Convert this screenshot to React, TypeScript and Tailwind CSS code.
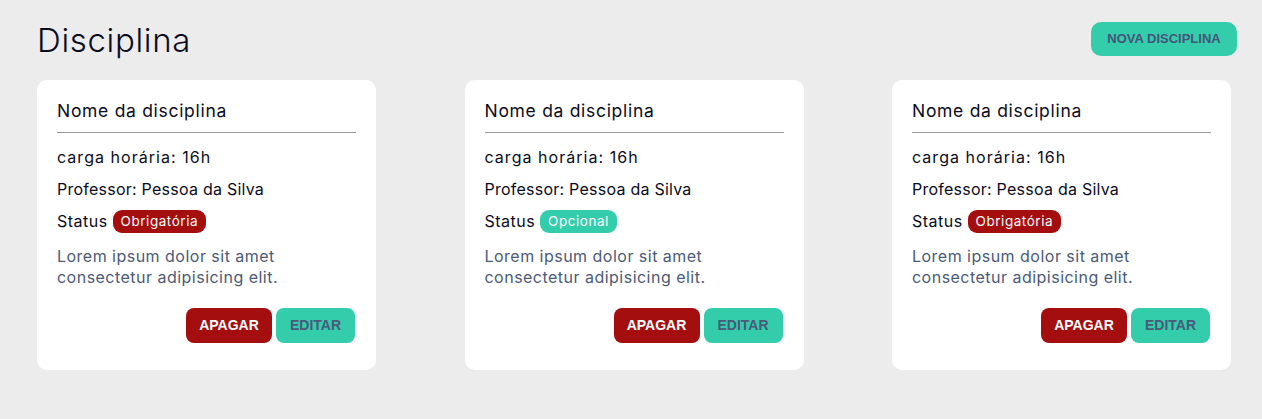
import React from "react";

type Status = "Obrigatória" | "Opcional";

interface Disciplina {
  id: number;
  nome: string;
  carga: string;
  professor: string;
  status: Status;
  descricao: string;
}

const disciplinas: Disciplina[] = [
  {
    id: 1,
    nome: "Nome da disciplina",
    carga: "16h",
    professor: "Pessoa da Silva",
    status: "Obrigatória",
    descricao: "Lorem ipsum dolor sit amet consectetur adipisicing elit.",
  },
  {
    id: 2,
    nome: "Nome da disciplina",
    carga: "16h",
    professor: "Pessoa da Silva",
    status: "Opcional",
    descricao: "Lorem ipsum dolor sit amet consectetur adipisicing elit.",
  },
  {
    id: 3,
    nome: "Nome da disciplina",
    carga: "16h",
    professor: "Pessoa da Silva",
    status: "Obrigatória",
    descricao: "Lorem ipsum dolor sit amet consectetur adipisicing elit.",
  },
];

function StatusBadge({ status }: { status: Status }) {
  const color = status === "Opcional" ? "bg-[#33cdac]" : "bg-[#a50e0e]";
  return (
    <span
      className={`${color} ml-[5px] inline-flex h-[23px] items-center rounded-[9px] px-[8px] text-[13.5px] tracking-[0.04em] text-white`}
    >
      {status}
    </span>
  );
}

function DisciplinaCard({ disciplina }: { disciplina: Disciplina }) {
  return (
    <div className="flex h-[290px] w-[339px] flex-col rounded-[10px] bg-white px-[20px] pt-[18px]">
      <h2 className="border-b border-[#9a9a9a] pb-[8px] text-[17.5px] leading-[26px] tracking-[0.04em] text-[#0b0b1e]">
        {disciplina.nome}
      </h2>
      <p className="mt-[12px] text-[16px] leading-[24px] tracking-[0.065em] text-[#0b0b1e]">
        carga horária: {disciplina.carga}
      </p>
      <p className="mt-[8px] text-[16px] leading-[24px] tracking-[0.015em] text-[#0b0b1e]">
        Professor: {disciplina.professor}
      </p>
      <div className="mt-[8px] flex items-center text-[16px] leading-[24px] tracking-[0.03em] text-[#0b0b1e]">
        Status
        <StatusBadge status={disciplina.status} />
      </div>
      <p className="mt-[13px] text-[16px] leading-[21px] tracking-[0.03em] text-[#4c5a78]">
        {disciplina.descricao}
      </p>
      <div className="mt-[20px] flex justify-end gap-[4px] pr-[1px]">
        <button className="h-[35px] w-[86px] rounded-[8px] bg-[#a50e0e] font-['Liberation_Sans',Arial,sans-serif] text-[14px] font-bold text-white">
          APAGAR
        </button>
        <button className="h-[35px] w-[79px] rounded-[8px] bg-[#33cdac] font-['Liberation_Sans',Arial,sans-serif] text-[14px] font-bold text-[#4b5a7a]">
          EDITAR
        </button>
      </div>
    </div>
  );
}

export default function App() {
  return (
    <div className="min-h-[419px] w-full bg-[#ececec] px-[37px] pt-[18px] font-['Inter','Noto_Sans',sans-serif]">
      <div className="flex w-[1200px] items-start justify-between">
        <h1 className="text-[33px] font-light leading-[44px] tracking-[0.02em] text-[#0b0b1e]">Disciplina</h1>
        <button className="mt-[4px] h-[34px] w-[146px] rounded-[10px] bg-[#33cdac] font-['Liberation_Sans',Arial,sans-serif] text-[13px] font-bold text-[#455578]">
          NOVA DISCIPLINA
        </button>
      </div>
      <div className="mt-[18px] grid grid-cols-[339px_339px_339px] gap-x-[88.5px]">
        {disciplinas.map((d) => (
          <DisciplinaCard key={d.id} disciplina={d} />
        ))}
      </div>
    </div>
  );
}
